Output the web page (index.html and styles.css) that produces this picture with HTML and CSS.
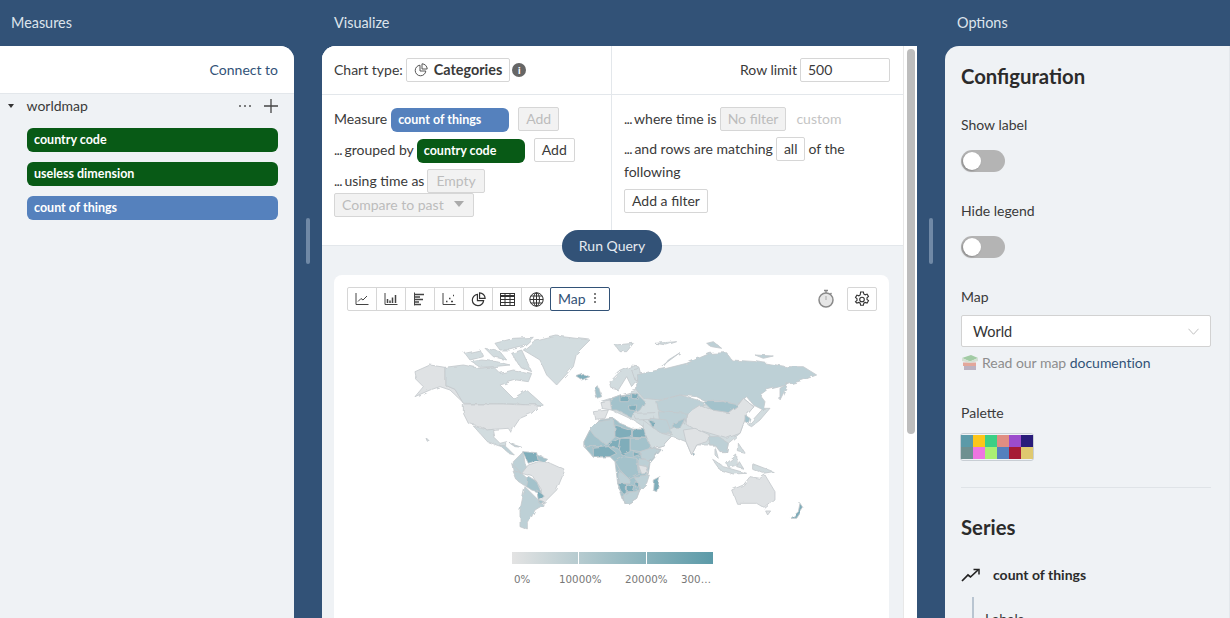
FILE: index.html
```html
<!DOCTYPE html>
<html lang="en">
<head>
  <meta charset="UTF-8">
  <title>Visualize</title>
  <link rel="stylesheet" href="styles.css">
</head>
<body>
  <div class="page">

    <!-- Measures -->
    <section class="col col-left">
      <div class="col-title">Measures</div>
      <div class="panel-left">
        <div class="connect"><a>Connect to</a></div>
        <div class="source">
          <span class="caret"></span>
          <span class="source-name">worldmap</span>
          <span class="dots"><i></i><i></i><i></i></span>
          <svg class="plus" width="14" height="14" viewBox="0 0 14 14"><path d="M7 0v14M0 7h14" stroke="#444" stroke-width="1.3"/></svg>
        </div>
        <div class="pill pill-dim pill-wide">country code</div>
        <div class="pill pill-dim pill-wide">useless dimension</div>
        <div class="pill pill-measure pill-wide">count of things</div>
      </div>
    </section>

    <!-- Visualize -->
    <section class="col col-center">
      <div class="col-title">Visualize</div>
      <div class="center-row">
        <div class="handle-wrap"><div class="handle"></div></div>
        <div class="panel-center">
          <div class="scroll-content">
            <div class="query">
              <div class="query-cell cell-head">
                <span>Chart type:</span>
                <span class="btn btn-chart">
                  <svg width="14" height="14" viewBox="0 0 14 14" fill="none" stroke="#555" stroke-width="1"><path d="M6 2.2a5.3 5.3 0 1 0 5.8 5.8H6z"/><path d="M8 .8a5.3 5.3 0 0 1 5.2 5.2H8z"/></svg>
                  <b>Categories</b>
                </span>
                <span class="info">i</span>
              </div>
              <div class="query-cell cell-head cell-right head-right">
                <span>Row limit</span>
                <span class="input-limit">500</span>
              </div>
              <div class="query-cell cell-body">
                <div class="line">
                  <span class="line-text">Measure</span>
                  <span class="pill pill-measure pill-m">count of things</span>
                  <span class="btn btn-off add-off">Add</span>
                </div>
                <div class="line">
                  <span class="line-text"><span class="ell">...</span> grouped by</span>
                  <span class="pill pill-dim pill-g">country code</span>
                  <span class="btn add-on">Add</span>
                </div>
                <div class="line line-tight">
                  <span class="line-text"><span class="ell">...</span> using time as</span>
                  <span class="btn btn-off btn-empty">Empty</span>
                </div>
                <div class="line-compare">
                  <span class="btn btn-off btn-compare">Compare to past <i class="tri"></i></span>
                </div>
              </div>
              <div class="query-cell cell-body cell-right">
                <div class="line">
                  <span class="line-text"><span class="ell">...</span> where time is</span>
                  <span class="btn btn-off">No filter</span>
                  <span class="muted">custom</span>
                </div>
                <div class="line line-match">
                  <span class="line-text"><span class="ell">...</span> and rows are matching</span>
                  <span class="btn btn-all">all</span>
                  <span class="line-text">of the</span>
                </div>
                <div class="following">following</div>
                <span class="btn btn-filter">Add a filter</span>
              </div>
            </div>

            <button class="run-query">Run Query</button>

            <div class="results">
              <div class="card">
                <div class="toolbar">
                  <div class="chart-types">
                    <span class="tool"><svg width="14" height="14" viewBox="0 0 14 14" fill="none" stroke="#444"><path d="M1 1v11.5h12.5"/><path d="M3 9.5l3-3 2 1.5 4-4"/></svg></span>
                    <span class="tool"><svg width="14" height="14" viewBox="0 0 14 14" fill="none" stroke="#444"><path d="M1 1v11.5h12.5"/><path d="M3.5 11V7M6 11V8.5M8.5 11V5.5M11.5 11V3" stroke-width="1.5"/></svg></span>
                    <span class="tool"><svg width="14" height="14" viewBox="0 0 14 14" fill="none" stroke="#444"><path d="M1.5 .5v13"/><path d="M2 2.5h9M2 5h5M2 7.5h8M2 10h4M2 12.5h6" stroke-width="1.3"/></svg></span>
                    <span class="tool"><svg width="14" height="14" viewBox="0 0 14 14" fill="none" stroke="#444"><path d="M1 1v11.5h12.5"/><path d="M4 9.5h1.5M7 6.5h1.5M9 9.5h2M11 3.5h1" stroke-width="1.6"/></svg></span>
                    <span class="tool"><svg width="15" height="15" viewBox="0 0 14 14" fill="none" stroke="#333" stroke-width="1.1"><path d="M6 2.2a5.3 5.3 0 1 0 5.8 5.8H6z"/><path d="M8 .8a5.3 5.3 0 0 1 5.2 5.2H8z"/></svg></span>
                    <span class="tool"><svg width="15" height="13" viewBox="0 0 15 13" fill="none" stroke="#333"><rect x=".5" y=".5" width="14" height="12" stroke-width="1"/><path d="M.5 3h14" stroke-width="2"/><path d="M5 .5v12M10 .5v12M.5 6.5h14M.5 9.5h14"/></svg></span>
                    <span class="tool"><svg width="15" height="15" viewBox="0 0 15 15" fill="none" stroke="#333"><circle cx="7.5" cy="7.5" r="6.7"/><ellipse cx="7.5" cy="7.5" rx="3" ry="6.7"/><path d="M7.5 .8v13.4M.8 7.5h13.4M1.8 4h11.4M1.8 11h11.4"/></svg></span>
                    <span class="tool tool-active">Map <span class="kebab"><i></i><i></i><i></i></span></span>
                  </div>
                  <div class="toolbar-right">
                    <svg class="timer" width="18" height="20" viewBox="0 0 18 20"><path d="M7 1.5h4M9 1.5v2.5M14.5 4l-1.5 1.5" stroke="#888" stroke-width="1.3" fill="none"/><circle cx="9" cy="11" r="7" fill="#e6e6e6" stroke="#8a8a8a" stroke-width="1.5"/><path d="M9 11V7" stroke="#aaa"/></svg>
                    <span class="tool tool-gear"><svg width="16" height="16" viewBox="0 0 16 16" fill="none" stroke="#333" stroke-width="1.1"><path d="M6.6 1h2.8l.4 2 1.4.8 1.9-.7 1.4 2.4-1.5 1.3v1.600l1.500 1.300-1.400 2.400-1.900-.7-1.400.8-.4 2H6.600l-.4-2-1.400-.8-1.900.7L1.500 10.700 3 9.400V7.800L1.500 6.500 2.900 4.100l1.900.7 1.400-.8z"/><circle cx="8" cy="8.500" r="2.300"/></svg></span>
                  </div>
                </div>

                <svg class="world" width="555" height="220" viewBox="334 330 555 220">
                  <defs>
                    <filter id="rough" x="-5%" y="-5%" width="110%" height="110%">
                      <feTurbulence type="fractalNoise" baseFrequency="0.12" numOctaves="2" seed="4"/>
                      <feDisplacementMap in="SourceGraphic" scale="4"/>
                      <feGaussianBlur stdDeviation="0.3"/>
                    </filter>
                  </defs>
                  <g filter="url(#rough)">
                  <g transform="translate(400 330) scale(.3333)">
                    <polygon class="c0" points="45,125 90,105 135,112 135,165 165,178 190,218 150,180 120,170 90,180 45,200 70,170 50,150"/>
                    <polygon class="c1" points="135,112 190,105 240,115 280,110 300,130 340,120 395,130 385,155 350,150 300,165 340,205 380,180 430,225 385,225 350,222 310,222 190,220 165,178 135,165"/>
                    <polygon class="c1" points="195,70 240,60 250,80 210,90"/>
                    <polygon class="c1" points="285,40 340,25 400,22 370,50 330,60 300,60"/>
                    <polygon class="c1" points="255,55 300,65 320,90 280,80"/>
                    <polygon class="c1" points="215,95 245,90 290,95 330,105 280,110 240,112"/>
                    <polygon class="c1" points="335,70 365,60 395,125 360,110"/>
                    <polygon class="c1" points="370,60 400,35 470,18 570,30 530,70 520,110 470,165 440,135 420,90"/>
                    <polygon class="c0" points="190,222 310,222 350,224 420,225 395,250 360,265 340,295 335,310 325,295 280,298 262,300 235,288 205,280 190,250"/>
                    <polygon class="c1" points="220,288 262,300 280,298 285,325 300,340 320,335 320,350 298,348 262,335 240,310"/>
                    <polygon class="c2" points="298,345 320,352 340,372 325,368"/>
                    <polygon class="c2" points="330,340 365,352 345,350"/>
                    <polygon class="c2" points="340,395 370,365 375,400 385,425 365,430 340,420"/>
                    <polygon class="c4" points="368,365 410,368 415,390 385,400"/>
                    <polygon class="c3" points="410,375 440,385 430,395 415,390"/>
                    <polygon class="c0" points="385,405 415,395 440,395 495,420 470,480 430,520 415,510 425,480 400,440 365,430"/>
                    <polygon class="c2" points="338,420 365,430 400,462 380,470 350,450"/>
                    <polygon class="c2" points="335,400 360,425 340,420"/>
                    <polygon class="c3" points="385,440 410,455 425,490 395,480 380,470"/>
                    <polygon class="c4" points="410,480 430,495 415,510"/>
                    <polygon class="c2" points="375,470 415,510 430,525 405,540 385,580 385,600 360,590 360,540"/>
                    <polygon class="c3" points="418,510 432,515 420,522"/>
                    <polygon class="c4" points="530,140 550,133 570,140 545,150"/>
                    <polygon class="c1" points="78,325 88,330 82,334"/>
                  </g>
                  <g transform="translate(600 330) scale(.3333)">
                    <!-- continent bases so the countries below leave no gaps -->
                    <polygon class="c3" points="-48,335 -30,300 0,270 40,265 60,280 97,295 130,295 150,350 165,355 185,358 150,400 145,430 120,480 110,505 85,520 72,518 53,460 45,395 30,380 -20,382 -48,350"/>
                    <polygon class="c1" points="0,215 110,180 240,195 300,225 430,205 462,230 440,255 420,310 385,340 380,365 345,345 290,345 275,375 258,335 215,318 190,345 155,355 130,290 100,270 35,240"/>
                    <polygon class="c3" points="-48,335 -30,300 0,270 40,265 45,320 10,350 -20,350 -48,350"/>
                    <polygon class="c2" points="-30,300 -5,275 40,268 45,320 20,345 -15,320"/>
                    <polygon class="c4" points="45,285 95,300 95,320 60,325 45,320"/>
                    <polygon class="c4" points="97,295 130,295 145,325 97,322"/>
                    <polygon class="c3" points="90,325 145,325 150,360 120,365 90,360"/>
                    <polygon class="c4" points="60,325 90,325 90,365 65,375 55,355"/>
                    <polygon class="c4" points="30,340 60,325 55,355 25,350"/>
                    <polygon class="c4" points="-20,355 25,350 50,370 30,380 -20,380"/>
                    <polygon class="c2" points="120,365 150,355 180,360 150,395 125,385"/>
                    <polygon class="c4" points="100,365 125,372 100,380"/>
                    <polygon class="c3" points="45,395 70,380 110,385 115,430 85,445 60,420"/>
                    <polygon class="c2" points="115,385 150,395 140,425 115,430"/>
                    <polygon class="c0" points="115,405 140,410 145,430 125,432"/>
                    <polygon class="c2" points="55,420 85,445 90,460 55,460"/>
                    <polygon class="c4" points="53,460 80,462 78,495 68,490"/>
                    <polygon class="c4" points="82,465 105,470 100,485 82,485"/>
                    <polygon class="c4" points="105,455 120,460 110,475"/>
                    <polygon class="c2" points="70,495 82,487 105,485 118,480 110,505 85,520 72,518"/>
                    <polygon class="c2" points="100,440 148,435 140,460 120,480 115,460"/>
                    <polygon class="c4" points="160,450 180,440 170,485 158,480"/>
                    <polygon class="c1" points="30,155 60,125 95,108 115,110 110,150 95,170 80,140 55,180 35,175"/>
                    <polygon class="c1" points="95,120 120,115 125,135 105,150"/>
                    <polygon class="c1" points="45,45 100,40 80,65 60,65"/>
                    <polygon class="c1" points="165,40 230,35 200,45"/>
                    <polygon class="c2" points="190,105 240,68 205,90 190,110"/>
                    <polygon class="c2" points="320,40 340,35 365,55 335,50"/>
                    <polygon class="c2" points="465,75 520,78 490,85"/>
                    <polygon class="c2" points="110,135 150,125 200,115 260,100 330,70 380,68 395,90 470,95 560,110 610,110 650,135 610,150 560,165 500,180 480,195 495,215 490,240 460,225 440,200 410,225 370,212 320,215 290,200 240,195 180,210 130,205 110,180"/>
                    <polygon class="c2" points="540,175 565,160 540,210"/>
                    <polygon class="c3" points="25,210 60,195 110,190 135,215 120,240 90,260 50,240 35,240"/>
                    <polygon class="c4" points="60,195 90,200 85,215 60,215"/>
                    <polygon class="c4" points="95,190 118,195 115,208 95,205"/>
                    <polygon class="c4" points="85,228 110,225 108,242 88,240"/>
                    <polygon class="c0" points="-20,245 25,240 15,265 -15,268"/>
                    <polygon class="c0" points="0,215 30,210 35,240 5,235"/>
                    <polygon class="c3" points="-15,180 -5,170 5,200 -10,205"/>
                    <polygon class="c1" points="100,250 165,248 160,268 110,270"/>
                    <polygon class="c2" points="170,215 240,195 310,215 300,245 260,250 200,250 175,240"/>
                    <polygon class="c3" points="310,215 370,215 415,225 385,248 335,240"/>
                    <polygon class="c0" points="260,250 300,225 335,240 385,248 415,225 430,205 462,230 440,255 420,310 380,325 330,310 280,295 255,280"/>
                    <polygon class="c2" points="175,245 260,250 250,280 215,300 180,285"/>
                    <polygon class="c3" points="220,280 255,265 240,295 220,295"/>
                    <polygon class="c2" points="150,265 200,270 215,310 180,310 155,290"/>
                    <polygon class="c1" points="130,270 155,290 185,310 215,318 190,345 155,355 135,310"/>
                    <polygon class="c4" points="145,270 165,275 160,295"/>
                    <polygon class="c0" points="250,300 285,295 330,315 320,335 290,345 275,375 258,335"/>
                    <polygon class="c4" points="280,370 287,375 283,380"/>
                    <polygon class="c2" points="325,320 355,320 385,340 380,365 360,365 345,345 330,345"/>
                    <polygon class="c1" points="345,350 355,385 345,375"/>
                    <polygon class="c1" points="445,285 490,235 510,235 480,270 455,290"/>
                    <polygon class="c3" points="435,255 450,265 445,280 435,275"/>
                    <polygon class="c1" points="415,340 435,370 415,365"/>
                    <polygon class="c1" points="335,385 370,410 440,430 400,432 360,420"/>
                    <polygon class="c1" points="380,400 410,375 412,405 385,412"/>
                    <polygon class="c1" points="418,395 430,415 410,410"/>
                    <polygon class="c1" points="455,400 520,425 490,430 455,415"/>
                    <polygon class="c0" points="395,480 430,465 450,440 480,445 495,435 525,485 525,510 495,535 470,520 410,520"/>
                    <polygon class="c0" points="497,543 512,543 503,555"/>
                    <polygon class="c4" points="573,565 595,545 600,520 610,535 590,565"/>
                  </g>
                  </g>
                </svg>

                <div class="legend">
                  <div class="legend-bar">
                    <span></span><span></span><span></span>
                  </div>
                  <div class="legend-labels">
                    <span class="lab-0">0%</span>
                    <span class="lab-1">10000%</span>
                    <span class="lab-2">20000%</span>
                    <span class="lab-3">300…</span>
                  </div>
                </div>
              </div>
            </div>
          </div>
          <div class="scrollbar"><div class="thumb"></div></div>
        </div>
        <div class="handle-wrap"><div class="handle"></div></div>
      </div>
    </section>

    <!-- Options -->
    <section class="col col-right">
      <div class="col-title title-options">Options</div>
      <div class="panel-right">
        <h2>Configuration</h2>
        <div class="field-label">Show label</div>
        <div class="toggle"></div>
        <div class="field-label">Hide legend</div>
        <div class="toggle"></div>
        <div class="field-label">Map</div>
        <div class="select">
          <span>World</span>
          <svg width="11" height="7" viewBox="0 0 12 7" fill="none" stroke="#bbb"><path d="M.5 .5L6 6.500 11.500 .5"/></svg>
        </div>
        <div class="help">
          <svg class="books" width="16" height="15" viewBox="0 0 16 15"><rect x="2" y="11" width="12" height="4" fill="#b3a8b8"/><rect x="1" y="7.500" width="13" height="3.500" fill="#e29a8c"/><path d="M0 3l9-3 7 3-8 3.500z" fill="#95c596"/><path d="M0 3v3l8 2 8-2V3L8 6.500z" fill="#cfdccd"/></svg>
          <span>Read our map <a>documention</a></span>
        </div>
        <div class="field-label label-palette">Palette</div>
        <div class="palette">
          <i style="background:#5b9aa8"></i><i style="background:#fcc61a"></i><i style="background:#3ccf85"></i><i style="background:#e08e82"></i><i style="background:#9c4ccc"></i><i style="background:#291c7a"></i>
          <i style="background:#6e9090"></i><i style="background:#ee75e0"></i><i style="background:#a9ef73"></i><i style="background:#5580bd"></i><i style="background:#a61b35"></i><i style="background:#dfc96f"></i>
        </div>
        <hr>
        <h2>Series</h2>
        <div class="series">
          <svg width="20" height="14" viewBox="0 0 20 14" fill="none" stroke="#222" stroke-width="1.700"><path d="M1 13l6-6 2.500 2L17 2"/><path d="M12.500 1.500h5.500v5" stroke-width="1.500"/></svg>
          <b>count of things</b>
        </div>
        <div class="series-sub"><div class="series-sub-text">Labels</div></div>
      </div>
    </section>
  </div>
</body>
</html>
```

FILE: styles.css
```css
* {
  box-sizing: border-box;
}

body {
  margin: 0;
  height: 618px;
  overflow: hidden;
  background: #325277;
  font-family: 'Lato', sans-serif;
  font-size: 14px;
  color: #3a3a3a;
}

a {
  color: #325277;
}

.page {
  display: grid;
  grid-template-columns: 294px 651px 285px;
  height: 618px;
}

.col {
  display: flex;
  flex-direction: column;
  min-height: 0;
  height: 618px;
}

.col-title {
  height: 46px;
  line-height: 46px;
  padding-left: 11px;
  font-size: 14.4px;
  color: #dde4ec;
  flex: none;
}

.col-center .col-title {
  padding-left: 40px;
}

.title-options {
  padding-left: 12px;
}

/* left panel */
.panel-left {
  flex: 1;
  background: #eff2f5;
  border-top-right-radius: 14px;
  overflow: hidden;
}

.connect {
  height: 48px;
  padding: 15px 16px 0 0;
  text-align: right;
  background: #fff;
  border-bottom: 1px solid #e3e7eb;
}

.source {
  display: flex;
  align-items: center;
  height: 23px;
  padding: 0 16px 0 8px;
}

.caret {
  width: 0;
  height: 0;
  border-left: 3.5px solid transparent;
  border-right: 3.5px solid transparent;
  border-top: 4px solid #333;
}

.source-name {
  margin-left: 12.5px;
  flex: 1;
}

.dots {
  display: flex;
  gap: 3px;
  margin-right: 13px;
}

.dots i {
  width: 2px;
  height: 2px;
  border-radius: 50%;
  background: #555;
}

.pill {
  display: inline-block;
  height: 24px;
  line-height: 24px;
  padding-left: 7px;
  border-radius: 6px;
  color: #fff;
  font-size: 12.5px;
  font-weight: 700;
}

.pill-dim {
  background: #085a16;
}

.pill-measure {
  background: #5581bd;
}

.pill-wide {
  display: block;
  width: 251px;
  margin: 10px 0 0 27px;
}

.source + .pill-wide {
  margin-top: 11px;
}

/* center */
.center-row {
  display: grid;
  grid-template-columns: 28px 595px 28px;
  flex: 1;
  min-height: 0;
}

.handle-wrap {
  display: flex;
  align-items: center;
  justify-content: center;
  padding-bottom: 182px;
}

.handle {
  width: 4px;
  height: 46px;
  border-radius: 2px;
  background: #7089a6;
}

.panel-center {
  display: flex;
  background: #fff;
  border-top-left-radius: 14px;
  overflow: hidden;
}

.scroll-content {
  width: 581px;
  flex: none;
  background: #eff2f5;
}

.scrollbar {
  width: 14px;
  padding: 3px 2px 0 3px;
  background: #fff;
  border-left: 1px solid #e8e8e8;
}

.thumb {
  height: 385px;
  border-radius: 5px;
  background: #bdbdbd;
}

.query {
  display: grid;
  grid-template-columns: 289px 292px;
  grid-template-rows: 49px 150px;
  background: #fff;
  border-bottom: 1px solid #e3e7eb;
}

.query-cell {
  padding-left: 12px;
}

.cell-right {
  border-left: 1px solid #e3e7eb;
}

.cell-head {
  display: flex;
  align-items: center;
  gap: 3px;
  padding-bottom: 1px;
  border-bottom: 1px solid #e3e7eb;
}

.head-right {
  justify-content: flex-end;
  padding-right: 13px;
}

.cell-body {
  padding-top: 12px;
}

.btn {
  display: inline-flex;
  align-items: center;
  height: 24px;
  padding: 0 7px;
  background: #fff;
  border: 1px solid #d6d6d6;
  border-radius: 2px;
  color: #3a3a3a;
}

.cell-body .btn {
  padding-bottom: 2px;
}

.btn-chart {
  gap: 6px;
  padding: 0 7px;
}

.btn-chart b {
  font-size: 14.4px;
  font-weight: 700;
}

.info {
  width: 14px;
  height: 14px;
  margin-left: -1px;
  line-height: 14px;
  text-align: center;
  border-radius: 50%;
  background: #666;
  color: #fff;
  font-size: 10px;
  font-weight: 900;
}

.input-limit {
  width: 90px;
  height: 24px;
  padding-left: 7px;
  line-height: 22px;
  border: 1px solid #d6d6d6;
  border-radius: 2px;
}

.line {
  display: flex;
  align-items: center;
  gap: 3px;
  height: 24px;
  margin-bottom: 7px;
}

.line-text {
  padding-bottom: 2px;
}

.ell {
  letter-spacing: -.7px;
  margin-right: -1px;
}

.line-tight {
  margin-bottom: 0;
}

.line-match {
  margin-top: -1px;
  margin-bottom: 0;
}

.btn-off {
  background: #f2f2f2;
  color: #bcbcbc;
}

.add-off {
  margin-left: 6px;
}

.add-on {
  margin-left: 6px;
}

.pill-m {
  width: 118px;
  margin: 2px 0 0 1px;
}

.pill-g {
  width: 108px;
  margin-top: 2px;
}

.cell-body .btn-empty {
  padding: 0 8px 2px;
}

.line-compare {
  height: 24px;
}

.btn-compare {
  gap: 6px;
}

.tri {
  width: 0;
  height: 0;
  margin: 0 2px 0 4px;
  border-left: 5px solid transparent;
  border-right: 5px solid transparent;
  border-top: 6px solid #aaa;
}

.muted {
  margin-left: 7px;
  padding-bottom: 2px;
  color: #c4c4c4;
}

.following {
  margin-top: 1px;
  line-height: 20px;
}

.btn-filter {
  display: flex;
  width: fit-content;
  margin-top: 7px;
}

.run-query {
  display: block;
  position: relative;
  width: 100px;
  height: 32px;
  margin: -16px 0 -16px 240px;
  padding: 0 0 2px;
  border: 0;
  border-radius: 16px;
  background: #325277;
  color: #e6ebf1;
  font-family: 'Lato', sans-serif;
  font-size: 14px;
}

.results {
  padding: 29px 14px 0 12px;
  background: #eff2f5;
}

.card {
  height: 400px;
  background: #fff;
  border-radius: 8px;
  padding: 12px 12px 0 13px;
}

.toolbar {
  display: flex;
  justify-content: space-between;
  align-items: flex-start;
}

.chart-types {
  display: flex;
}

.toolbar-right {
  display: flex;
  align-items: center;
  gap: 12px;
}

.tool {
  display: flex;
  align-items: center;
  justify-content: center;
  width: 30px;
  height: 24px;
  margin-right: -1px;
  border: 1px solid #d6d6d6;
  background: #fff;
}

.tool:first-child {
  border-radius: 2px 0 0 2px;
}

.tool-active {
  position: relative;
  justify-content: flex-start;
  width: 60px;
  margin-right: 0;
  padding: 0 0 2px 7px;
  border-color: #325277;
  border-radius: 2px;
  color: #325277;
  gap: 8px;
}

.kebab {
  display: flex;
  flex-direction: column;
  gap: 2px;
}

.kebab i {
  width: 2px;
  height: 2px;
  border-radius: 50%;
  background: #555;
}

.tool-gear {
  width: 30px;
  margin-right: 0;
  border-radius: 2px;
}

.world {
  display: block;
  margin: 19px 0 0 -13px;
}

.world polygon {
  stroke: #c4c9cc;
  stroke-width: 2.5;
  stroke-linejoin: round;
}

.c0 { fill: #dfe2e4; }
.c1 { fill: #d2dcdf; }
.c2 { fill: #bdd0d6; }
.c3 { fill: #a3c2cb; }
.c4 { fill: #7fadba; }

.legend {
  width: 202px;
  margin: 2px 0 0 165px;
}

.legend-bar {
  display: flex;
  height: 12px;
  background: linear-gradient(to right, #e3e3e3, #5b9aa8);
}

.legend-bar span {
  flex: 1;
  border-right: 1px solid #fff;
}

.legend-labels {
  display: flex;
  margin-top: 9px;
  font-family: 'DejaVu Sans', sans-serif;
  font-size: 10.3px;
  color: #777;
  white-space: nowrap;
}

.lab-0 {
  width: 47px;
  padding-left: 2px;
}

.lab-1 {
  width: 66px;
}

.lab-2 {
  width: 56px;
}

/* options */
.panel-right {
  flex: 1;
  padding: 0 19px 0 16px;
  background: #eff2f5;
  border-top-left-radius: 14px;
  border-right: 1px solid #e4e8ec;
  overflow: hidden;
}

.panel-right h2 {
  margin: 17px 0 0;
  font-size: 20.3px;
  line-height: 26px;
  font-weight: 700;
  color: #2b2b2b;
}

.field-label {
  margin-top: 30px;
  line-height: 17px;
}

.panel-right h2 + .field-label {
  margin-top: 27px;
}

.toggle {
  position: relative;
  width: 44px;
  height: 22px;
  margin-top: 17px;
  border-radius: 11px;
  background: #b4b4b4;
}

.toggle::after {
  content: "";
  position: absolute;
  left: 2px;
  top: 2px;
  width: 18px;
  height: 18px;
  border-radius: 50%;
  background: #fff;
  box-shadow: -1px 1px 2px #888;
}

.select {
  display: flex;
  align-items: center;
  justify-content: space-between;
  width: 250px;
  height: 32px;
  margin-top: 10px;
  padding: 0 11px 0 11px;
  background: #fff;
  border: 1px solid #d2d2d2;
  border-radius: 2px;
  font-size: 14.5px;
  color: #333;
}

.help {
  display: flex;
  align-items: center;
  gap: 4px;
  height: 20px;
  margin-top: 5px;
  color: #8d8d8d;
  letter-spacing: -.03px;
}

.books {
  margin-left: 1px;
  opacity: .85;
}

.label-palette {
  margin-top: 32px;
}

.palette {
  display: grid;
  grid-template-columns: repeat(6, 12px);
  grid-auto-rows: 12px;
  width: 74px;
  margin: 12px 0 0 -1px;
  padding: 1px 0;
  border: 1px solid #c8ced4;
  border-radius: 3px;
}

.palette i {
  display: block;
}

.panel-right hr {
  width: 250px;
  margin: 26px 0 0;
  border: 0;
  border-top: 1px solid #dfe3e7;
}

.panel-right hr + h2 {
  margin-top: 26px;
}

.series {
  display: flex;
  align-items: center;
  gap: 12px;
  margin-top: 26px;
  color: #2b2b2b;
}

.series-sub {
  height: 40px;
  margin: 14px 0 0 11px;
  padding-left: 11px;
  border-left: 2px solid #b9c5d1;
}

.series-sub-text {
  padding-top: 13px;
  font-size: 14px;
}
```
